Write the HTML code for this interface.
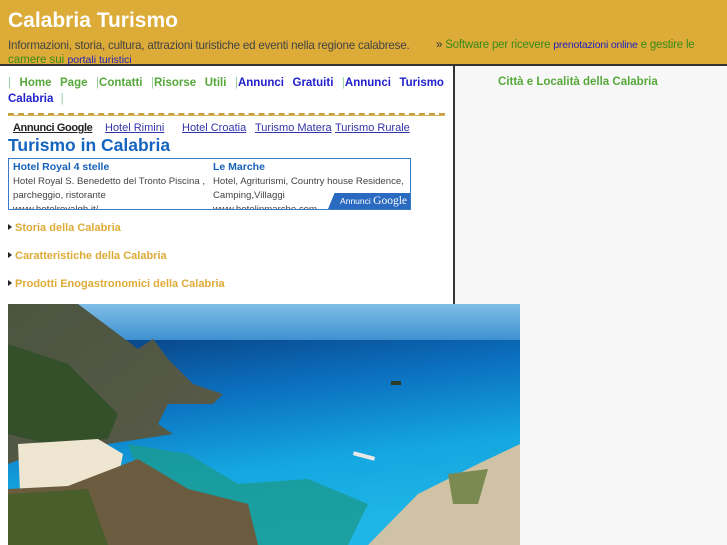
<!DOCTYPE html>
<html><head><meta charset="utf-8"><style>
*{margin:0;padding:0;box-sizing:border-box}
body{width:727px;height:545px;overflow:hidden;background:#fff;font-family:"Liberation Sans",sans-serif;position:relative}
.hdr{position:absolute;left:0;top:0;width:727px;height:66px;background:#dcab38;border-bottom:2px solid #333}
.t{position:absolute;left:8px;top:9px;font-size:21px;font-weight:bold;color:#fff}
.sub{position:absolute;left:8px;top:39px;font-size:11.6px;color:#444;letter-spacing:-0.2px}
.sw{position:absolute;left:436px;top:39px;font-size:11.5px;color:#3a8a18;letter-spacing:-0.2px}
.sw2{position:absolute;left:8px;top:54px;font-size:11.5px;color:#3a8a18}
.b{color:#2222bb;font-size:10.5px}
.vl{position:absolute;left:453px;top:66px;width:2px;height:479px;background:#333}
.rc{position:absolute;left:455px;top:66px;width:272px;height:479px;background:#f7f7f7}
.rt{position:absolute;left:498px;top:76px;font-size:11.5px;font-weight:bold;color:#56a83a}
.nav{position:absolute;left:8px;top:75px;width:436px;font-size:11.5px;font-weight:bold;line-height:16px;color:#56a83a;word-spacing:4px;text-align:justify}
.nav .bl{color:#2020cc}
.nav .p{color:#9c9;font-weight:normal}
.dash{position:absolute;left:8px;top:113px;width:437px;height:3px;border-top:2px dashed #c9a040;border-bottom:1px solid #d8b050}
.ads{position:absolute;left:13px;top:122px;font-size:11px;color:#3333aa}
.ads span{position:absolute;top:0;white-space:nowrap;text-decoration:underline}
h1{position:absolute;left:8px;top:135px;font-size:17.5px;color:#1565c0;font-weight:bold}
.box{position:absolute;left:8px;top:158px;width:403px;height:52px;border:1px solid #3a7cc4;overflow:hidden;font-size:9.6px;line-height:14px;color:#444}
.box b{color:#1560b8;font-size:10.5px}
.c1{position:absolute;left:4px;top:1px;width:198px}
.c2{position:absolute;left:204px;top:1px;width:198px}
.gg{position:absolute;right:0;bottom:0;width:82px;height:16px;background:#2a6ac0;color:#fff;font-size:8.5px;line-height:16px;text-align:right;padding-right:3px;clip-path:polygon(8% 0,100% 0,100% 100%,0 100%)}
.gg i{font-style:normal;font-size:11.5px;font-family:"Liberation Serif",serif}
.lk{position:absolute;left:8px;font-size:11px;font-weight:bold;color:#dcab38}
.lk:before{content:"";display:inline-block;border-left:4px solid #222;border-top:3px solid transparent;border-bottom:3px solid transparent;margin-right:3px;vertical-align:1px}
</style></head><body>
<div class="hdr">
<div class="t">Calabria Turismo</div>
<div class="sub">Informazioni, storia, cultura, attrazioni turistiche ed eventi nella regione calabrese.</div>
<div class="sw"><span style="color:#333">»</span> Software per ricevere <span class="b">prenotazioni online</span> e gestire le</div>
<div class="sw2">camere sui <span class="b">portali turistici</span></div>
</div>
<div class="rc"></div><div class="vl"></div>
<div class="rt">Città e Località della Calabria</div>
<div class="nav"><span class="p">|</span> Home Page <span class="p">|</span>Contatti <span class="p">|</span>Risorse Utili <span class="p">|</span><span class="bl">Annunci Gratuiti</span> <span class="p">|</span><span class="bl">Annunci Turismo Calabria</span> <span class="p">|</span></div>
<div class="dash"></div>
<div class="ads"><span style="left:0;color:#222;font-weight:bold;letter-spacing:-0.4px">Annunci Google</span><span style="left:92px">Hotel Rimini</span><span style="left:169px">Hotel Croatia</span><span style="left:242px">Turismo Matera</span><span style="left:322px">Turismo Rurale</span></div>
<h1>Turismo in Calabria</h1>
<div class="box">
<div class="c1"><b>Hotel Royal 4 stelle</b><br>Hotel Royal S. Benedetto del Tronto Piscina , parcheggio, ristorante<br>www.hotelroyalgh.it/</div>
<div class="c2"><b>Le Marche</b><br>Hotel, Agriturismi, Country house Residence, Camping,Villaggi<br>www.hotelinmarche.com</div>
<div class="gg">Annunci <i>Google</i></div>
</div>
<div class="lk" style="top:222px">Storia della Calabria</div>
<div class="lk" style="top:250px">Caratteristiche della Calabria</div>
<div class="lk" style="top:278px">Prodotti Enogastronomici della Calabria</div>
<svg style="position:absolute;left:8px;top:304px" width="512" height="241" viewBox="0 0 512 241">
<defs>
<linearGradient id="sky" x1="0" y1="0" x2="0" y2="1"><stop offset="0" stop-color="#7fbfe6"/><stop offset="1" stop-color="#3d8fd0"/></linearGradient>
<linearGradient id="sea" x1="0" y1="0" x2="0.3" y2="1"><stop offset="0" stop-color="#0a3f7e"/><stop offset="0.35" stop-color="#0b6fbf"/><stop offset="0.7" stop-color="#14a6e0"/><stop offset="1" stop-color="#1fb5e6"/></linearGradient>
<linearGradient id="rk" x1="0" y1="0" x2="1" y2="1"><stop offset="0" stop-color="#4a5540"/><stop offset="1" stop-color="#5a5a48"/></linearGradient>
</defs>
<rect width="512" height="37" fill="url(#sky)"/>
<rect y="36" width="512" height="205" fill="url(#sea)"/>
<path d="M0 0 L70 0 L110 30 L130 45 L145 35 L160 55 L185 80 L215 90 L205 100 L160 100 L150 120 L165 130 L100 140 L40 145 L0 160Z" fill="url(#rk)"/>
<path d="M0 40 L60 60 L110 110 L100 135 L40 140 L0 130Z" fill="#34502a"/>
<path d="M10 140 L90 135 L115 150 L110 175 L60 185 L12 188Z" fill="#efe6d2"/>
<path d="M120 140 L180 150 L230 180 L300 175 L360 200 L340 241 L200 241 L150 200 L130 170Z" fill="#1a9a8f" opacity="0.8"/>
<path d="M0 185 L60 182 L130 155 L180 185 L240 200 L250 241 L0 241Z" fill="#6b5b3f"/>
<path d="M0 190 L80 185 L100 241 L0 241Z" fill="#4a5e2c"/>
<path d="M360 241 L410 190 L470 160 L512 140 L512 241Z" fill="#cfc2a5"/>
<path d="M440 170 L480 165 L470 200 L445 200Z" fill="#7a8a50"/>
<rect x="345" y="150" width="22" height="4" fill="#e8e8e8" transform="rotate(15 356 152)"/>
<rect x="383" y="77" width="10" height="4" fill="#2c3a2a"/>
</svg>
</body></html>
